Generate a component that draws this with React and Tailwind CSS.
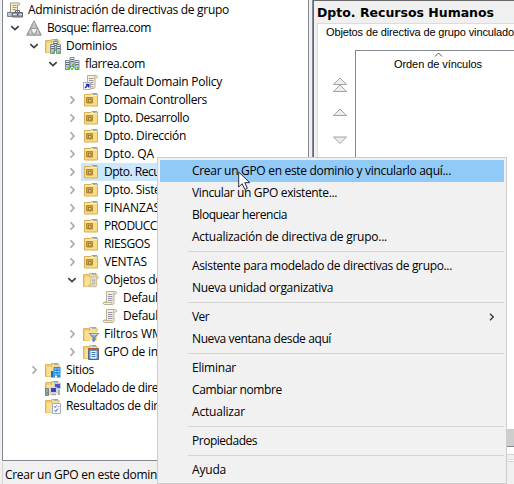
import { useLayoutEffect, useRef } from "react";

// Text spaced so that it runs exactly `w` pixels wide.
function Label({ children, w, className = "" }) {
  const ref = useRef(null);
  useLayoutEffect(() => {
    const el = ref.current;
    el.style.letterSpacing = "0px";
    const natural = el.getBoundingClientRect().width;
    el.style.letterSpacing = `${(w - natural) / children.length}px`;
  }, [children, w]);
  return (
    <span ref={ref} className={`inline-block shrink-0 whitespace-pre ${className}`}>
      {children}
    </span>
  );
}

function Svg({ children }) {
  return (
    <svg viewBox="0 0 16 16" className="h-4 w-4 shrink-0">
      {children}
    </svg>
  );
}

function FolderShape() {
  return (
    <>
      <path d="M.5 2.500h5l1 1V14.500h-6z" fill="#f3cf73" stroke="#dfb458" />
      <path d="M6.500 1.500h6.500l1 1V6h-7.500z" fill="#f8dc8f" stroke="#dfb458" />
      <path d="M9 1.500h4v1H9z" fill="#4aa0e8" />
      <path d="M2 5h12v9.500H2z" fill="#f9df98" />
    </>
  );
}

function ScrollShape() {
  return (
    <>
      <path d="M4.500 1.500h9c1.500 0 1.800 2.500 0 2.500h-1.500v8.500c0 1-.5 2-1.500 2h-8c-1.600 0-1.600-2.500 0-2.500h2z" fill="#f8f0cf" stroke="#b0a78a" strokeWidth=".9" />
      <path d="M12 4c-.8-.4-.8-2 .6-2.300M2.500 12.500h7.500c-.5.7 0 1.700.5 1.900" fill="none" stroke="#b0a78a" strokeWidth=".8" />
      <path d="M6 4.500h4.500M6 6.500h4.500M6 8.500h4.500M6 10.500h4.500" stroke="#9995a8" />
    </>
  );
}

function Tower({ x, y }) {
  return (
    <g transform={`translate(${x} ${y})`}>
      <path d="M.5.5h4v9h-4z" fill="#bac5cd" stroke="#768591" strokeWidth=".9" />
      <path d="M1 2.500h3M1 4.500h3" stroke="#52616d" strokeWidth=".9" />
      <path d="M1 1.500h3M1 3.500h3" stroke="#eef3f6" strokeWidth=".8" />
      <path d="M2.500 7h2v2h-2z" fill="#4ed321" />
    </g>
  );
}

const icons = {
  console: (
    <Svg>
      <path d="M3.500 1h8c1.500 0 1.800 2 0 2.200h-1V12H2.500c-1.300 0-1.300-2 0-2h1z" fill="#f7eecb" stroke="#94907f" strokeWidth=".9" />
      <path d="M5.500 3.500h4M5.500 5.500h4M5.500 7.500h3" stroke="#9a96a3" />
      <path d="M8.500 10V8.500h4V10" fill="none" stroke="#59656f" />
      <path d="M5.500 10.500h10v4.500h-10z" fill="#8e9baa" stroke="#5f6a74" />
      <path d="M6 12.500h9" stroke="#dce2e8" />
      <path d="M10 11.500h1.500v2H10z" fill="#3f4953" />
      <path d="M.5 10.500h4.500v4H.5z" fill="#bfc5ca" stroke="#7b858e" />
    </Svg>
  ),
  forest: (
    <Svg>
      <path d="M8 .8l7.300 14.400H.7z" fill="#b4b4b4" stroke="#8a8a8a" strokeWidth=".9" />
      <path d="M4.400 8.500h7.200L8 15z" fill="#f6f6f6" stroke="#8e8e8e" strokeWidth=".8" />
      <path d="M8 2.500v5.500M4.300 10v4.700M11.700 10v4.700" stroke="#dcdcdc" />
    </Svg>
  ),
  domains: (
    <Svg>
      <FolderShape />
      <Tower x={8} y={3} />
      <Tower x={5} y={6} />
      <Tower x={11} y={6} />
    </Svg>
  ),
  domain: (
    <Svg>
      <Tower x={5.500} y={1} />
      <Tower x={1} y={4} />
      <Tower x={10.500} y={4} />
      <path d="M6 11l2 2.500 2-2.500" fill="none" stroke="#6a7884" />
      <path d="M7 12h2v2H7z" fill="#4ed321" />
    </Svg>
  ),
  link: (
    <Svg>
      <ScrollShape />
      <path d="M.5 8.500h7v7h-7z" fill="#fff" stroke="#a9aec4" />
      <path d="M2 14l3-3M2.800 10.500h3v3" fill="none" stroke="#2b2c9c" strokeWidth="1.500" />
    </Svg>
  ),
  ou: (
    <Svg>
      <path d="M1.500 2.500h6l1-1h5.500l.5 1v11.500h-13z" fill="#f8dc86" stroke="#d9ad50" />
      <path d="M10 1.500h4v1h-4z" fill="#3f98e6" />
      <path d="M2 4h6.500l1-.5H14" fill="none" stroke="#fff0be" />
      <path d="M3.500 5.500h6v5.500h-6z" fill="#c9a24a" stroke="#b38b34" />
      <path d="M5.500 7.500h2.500v2.500H5.500z" fill="#f0e2b0" stroke="#7d621f" strokeWidth=".7" />
    </Svg>
  ),
  gpos: (
    <Svg>
      <FolderShape />
      <g transform="translate(4.500 3.700) scale(.76)"><ScrollShape /></g>
    </Svg>
  ),
  gpo: <Svg><ScrollShape /></Svg>,
  filter: (
    <Svg>
      <FolderShape />
      <path d="M6.500 7.500h9l-3.500 4v3l-2 1v-4z" fill="#8fb0c9" stroke="#4a6680" strokeWidth=".9" />
      <path d="M7.500 8.200h7" stroke="#e4f1f8" />
    </Svg>
  ),
  starter: (
    <Svg>
      <FolderShape />
      <path d="M5.500 4.500h10v11h-10z" fill="#6d93c2" stroke="#49688e" />
      <path d="M5 4h11v2H5z" fill="#c0583c" />
      <path d="M7.500 7h6v7.500h-6z" fill="#f1f7fd" />
      <path d="M8.500 8.500h4M8.500 10.500h4M8.500 12.500h4" stroke="#3f74b4" />
    </Svg>
  ),
  sites: (
    <Svg>
      <FolderShape />
      <path d="M8.500 5h7v10.500h-7z" fill="#2688dc" />
      <path d="M6 9h2.500v6.500H6z" fill="#1e70bd" />
      <path d="M9.500 7h5M9.500 9.500h5M9.500 12h5" stroke="#c7e7ff" strokeDasharray="2 1" strokeWidth="1.200" />
      <path d="M10 13.500h2v2h-2z" fill="#fff" />
    </Svg>
  ),
  modeling: (
    <Svg>
      <FolderShape />
      <path d="M.5 8.500h3v7h-3z" fill="#9aa5ad" stroke="#66717a" strokeWidth=".8" />
      <path d="M1.500 12H3v2H1.500z" fill="#42c42b" />
      <path d="M9.500 3.500h6v5h-6z" fill="#5059c2" stroke="#c7cad8" />
      <path d="M5.500 7.500h6v5h-6z" fill="#3c45b5" stroke="#d0d3df" />
      <path d="M13 9.500h2v5.500h-2z" fill="#a7afb7" />
      <path d="M6.500 14.500h4.500" stroke="#a5aab0" strokeWidth="1.500" />
    </Svg>
  ),
  results: (
    <Svg>
      <FolderShape />
      <path d="M7.500 5.500h8v10h-8z" fill="#f7f9fd" stroke="#a3adbf" />
      <path d="M9 8.500l1 1 1.500-2M9.500 12l1.200 1.500 2.300-3" fill="none" stroke="#3269bb" />
      <path d="M12.500 8.500h2" stroke="#9cabc3" />
    </Svg>
  ),
};

function Chevron({ open }) {
  return (
    <svg viewBox="0 0 10 10" className="h-2.5 w-2.5 shrink-0">
      {open ? (
        <path d="M1.300 3.200L5 6.700l3.700-3.500" fill="none" stroke="#404040" strokeWidth="1.700" />
      ) : (
        <path d="M3.500 1.200L7 5 3.500 8.800" fill="none" stroke="#a6a6a6" strokeWidth="1.600" />
      )}
    </svg>
  );
}

const pads = ["pl-0", "pl-[7px]", "pl-[26px]", "pl-[45px]", "pl-[64px]", "pl-[83px]"];

// depth, icon, text, width, expander state, selected
const tree = [
  [0, "console", "Administración de directivas de grupo", 201],
  [1, "forest", "Bosque: flarrea.com", 104, "open"],
  [2, "domains", "Dominios", 51, "open"],
  [3, "domain", "flarrea.com", 60, "open"],
  [4, "link", "Default Domain Policy", 118, "none"],
  [4, "ou", "Domain Controllers", 103, "closed"],
  [4, "ou", "Dpto. Desarrollo", 85, "closed"],
  [4, "ou", "Dpto. Dirección", 82, "closed"],
  [4, "ou", "Dpto. QA", 50, "closed"],
  [4, "ou", "Dpto. Recursos Humanos", 131, "closed", true],
  [4, "ou", "Dpto. Sistemas", 79, "closed"],
  [4, "ou", "FINANZAS", 56, "closed"],
  [4, "ou", "PRODUCCIÓN", 73, "closed"],
  [4, "ou", "RIESGOS", 46, "closed"],
  [4, "ou", "VENTAS", 43, "closed"],
  [4, "gpos", "Objetos de directiva de grupo", 156, "open"],
  [5, "gpo", "Default Domain Controllers Policy", 178, "none"],
  [5, "gpo", "Default Domain Policy", 118, "none"],
  [4, "filter", "Filtros WMI", 62, "closed"],
  [4, "starter", "GPO de inicio", 72, "closed"],
  [2, "sites", "Sitios", 28, "closed"],
  [2, "modeling", "Modelado de directivas de grupo", 171, "none"],
  [2, "results", "Resultados de directivas de grupo", 179, "none"],
];

function TreeRow({ row }) {
  const [depth, icon, text, width, state, selected] = row;
  return (
    <div className={`flex h-[18px] items-center ${pads[depth]}`}>
      {state === "open" && <Chevron open />}
      {state === "closed" && <Chevron />}
      {state === "none" && <span className="w-2.5 shrink-0" />}
      <div className={`flex h-[18px] items-center gap-[5px] ${state ? "ml-[4px]" : "ml-[2px]"} pl-[2px] ${selected ? "bg-[#cce8ff]" : ""}`}>
        {icons[icon]}
        <Label w={width}>{text}</Label>
      </div>
    </div>
  );
}

const menu = [
  [
    ["Crear un GPO en este dominio y vincularlo aquí...", 259],
    ["Vincular un GPO existente...", 145],
    ["Bloquear herencia", 95],
    ["Actualización de directiva de grupo...", 195],
  ],
  [
    ["Asistente para modelado de directivas de grupo...", 260],
    ["Nueva unidad organizativa", 141],
  ],
  [
    ["Ver", 17],
    ["Nueva ventana desde aquí", 139],
  ],
  [
    ["Eliminar", 44],
    ["Cambiar nombre", 90],
    ["Actualizar", 53],
  ],
  [["Propiedades", 65]],
  [["Ayuda", 34]],
];

function ContextMenu() {
  return (
    <div className="absolute left-[157px] top-[157px] h-[327px] w-[350px] border border-[#cccccc] bg-[#f1f1f1] p-[2px]">
      {menu.map((group, g) => (
        <div key={g}>
          {g > 0 && <div className="my-[3px] ml-[28px] h-px bg-[#d5d5d5]" />}
          {group.map(([text, width], i) => (
            <div
              key={text}
              className={`flex h-[22px] items-center justify-between pl-8 pr-[9px] ${g === 0 && i === 0 ? "bg-[#91c9f7]" : ""}`}
            >
              <Label w={width}>{text}</Label>
              {text === "Ver" && (
                <svg viewBox="0 0 6 8" className="h-2 w-1.5">
                  <path d="M1 .8L4.300 4 1 7.200" fill="none" stroke="#333" strokeWidth="1.300" />
                </svg>
              )}
            </div>
          ))}
        </div>
      ))}
    </div>
  );
}

function OrderArrow({ className, d }) {
  return (
    <svg viewBox="0 0 16 16" className={`h-4 w-4 shrink-0 ${className}`}>
      <path d={d} fill="#ededed" stroke="#999" strokeWidth=".9" />
    </svg>
  );
}

export default function App() {
  return (
    <div className="relative flex h-[484px] w-[514px] overflow-hidden bg-[#f0f0f0] font-['Open_Sans','Noto_Sans',sans-serif] text-[12px] leading-[18px] text-black">
      <div className="flex w-[309px] shrink-0 flex-col pl-[2px]">
        <div className="h-[461px] overflow-hidden border-x border-b border-[#828790] bg-white pt-px">
          {tree.map((row, i) => (
            <TreeRow key={i} row={row} />
          ))}
        </div>
        <div className="mt-px flex h-[22px] items-center border-l border-[#d5d5d5] pl-[2px] pt-[3px]">
          <Label w={259}>Crear un GPO en este dominio y vincularlo aquí...</Label>
        </div>
      </div>

      <div className="ml-[3px] flex min-w-0 flex-1 flex-col">
        <div className="flex h-[447px] flex-col border-b border-l border-[#828790]">
          <div className="flex min-h-0 flex-1 flex-col border-l border-t border-[#696969]">
            <div className="flex h-[22px] items-center pl-[3px] pt-px">
              <Label w={177} className="font-['DejaVu_Sans',sans-serif] text-[12.5px] font-bold">Dpto. Recursos Humanos</Label>
            </div>
            <div className="ml-[3px] flex h-[406px] flex-col overflow-hidden border-l border-t border-[#dcdcdc] bg-white font-['Liberation_Sans',sans-serif] text-[11px]">
              <div className="flex h-[26px] items-start pl-[8px]">
                <Label w={188} className="-mt-px">Objetos de directiva de grupo vinculado</Label>
              </div>
              <div className="flex min-h-0 flex-1">
                <div className="flex w-[37px] shrink-0 flex-col pl-[14px] pt-[27px]">
                  <OrderArrow d="M8 1l6.500 6.500h-13zM8 8l6.500 6.500h-13z" className="" />
                  <OrderArrow d="M8 4l6.500 6.500h-13z" className="mt-[12px]" />
                  <OrderArrow d="M8 11.500L1.500 5h13z" className="mt-[11px]" />
                </div>
                <div className="flex-1 border-l border-t border-[#828790]">
                  <svg viewBox="0 0 9 5" className="ml-[78px] mt-px h-[5px] w-[9px]">
                    <path d="M1 4.500l3.500-3.500L8 4.500" fill="none" stroke="#555" />
                  </svg>
                  <div className="-mt-0.5 flex pl-[38px]">
                    <Label w={88}>Orden de vínculos</Label>
                  </div>
                </div>
              </div>
            </div>
            <div className="flex-1 bg-[#cdcdcd]" />
          </div>
        </div>
        <div className="h-[7px] bg-white" />
        <div className="h-px bg-[#d5d5d5]" />
        <div className="mt-[4px] h-px bg-[#dedede]" />
        <div className="h-px bg-white" />
        <div className="h-px bg-[#d5d5d5]" />
      </div>

      <ContextMenu />

      <svg viewBox="0 0 13 20" className="absolute left-[238px] top-[171px] h-5 w-[13px]">
        <path d="M.7 1v15l3.500-3.300 2.600 5.800 2.600-1.200-2.600-5.600h5z" fill="#fff" stroke="#222a40" />
      </svg>
    </div>
  );
}
